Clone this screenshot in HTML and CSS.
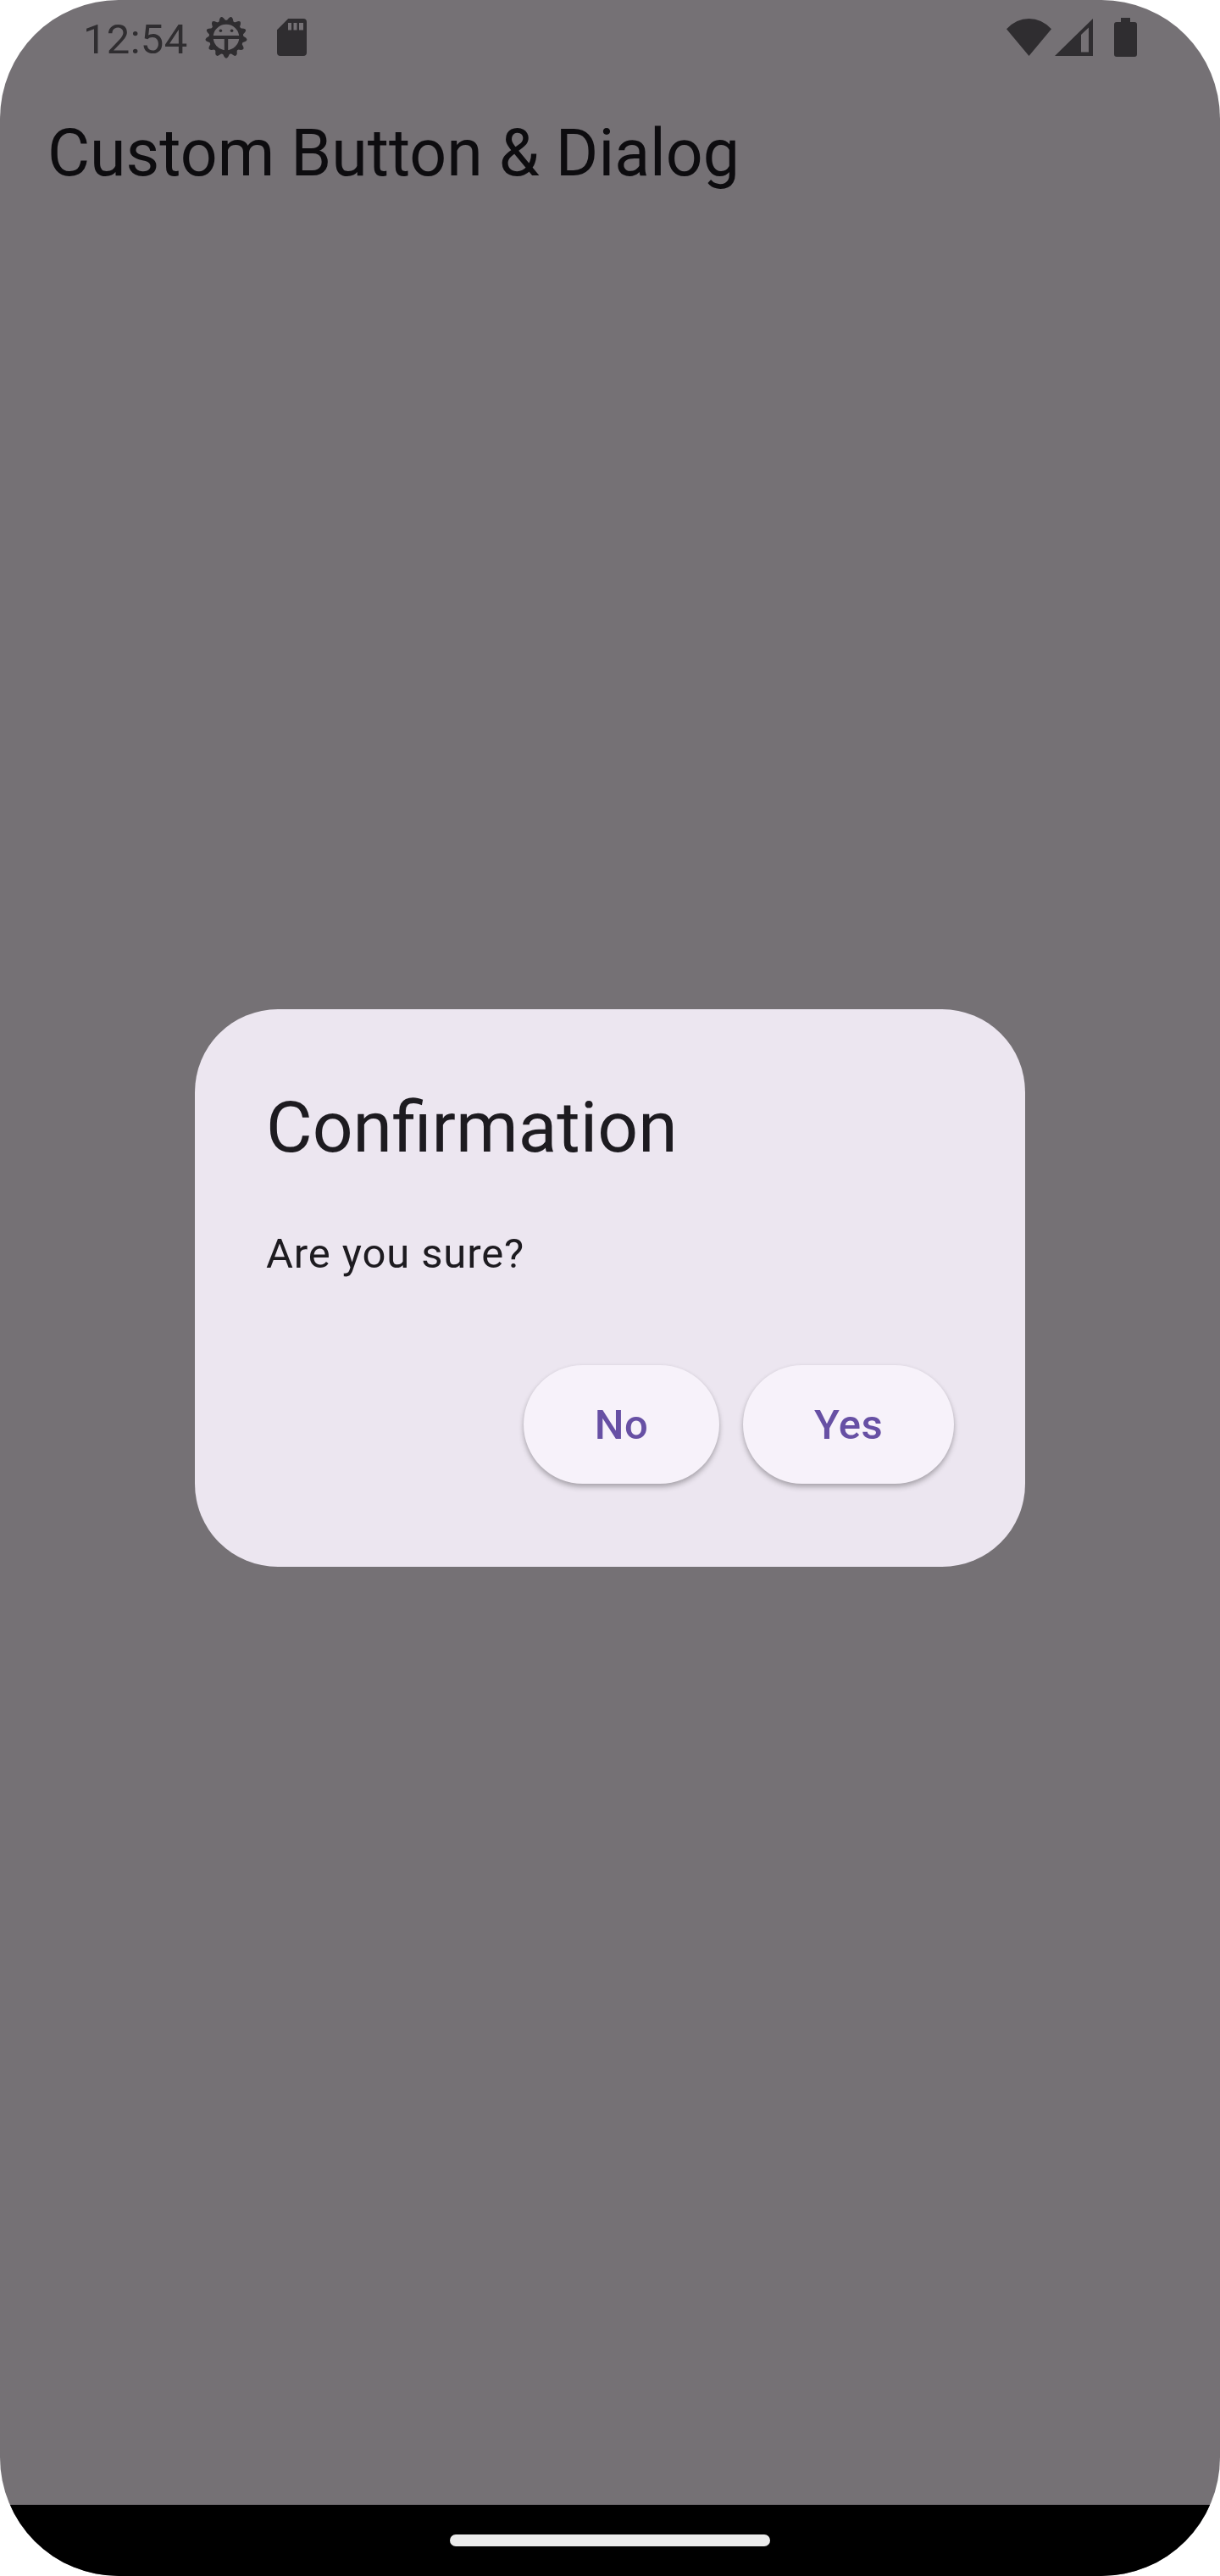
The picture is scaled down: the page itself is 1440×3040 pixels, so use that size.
FILE: index.html
```html
<!DOCTYPE html>
<html lang="en">
<head>
<meta charset="utf-8">
<title>Custom Button &amp; Dialog</title>
<link rel="stylesheet" href="styles.css">
</head>
<body>
<div class="screen">
  <header class="status-bar">
    <span class="clock">12:54</span>
    <svg class="icon-gear" width="50" height="50" viewBox="-25 -25 50 50">
      <defs><path id="tooth" d="M-4.6 18.5L-2.3 22.9Q0 26.4 2.3 22.9L4.6 18.5Z"/></defs>
      <circle r="17.8" fill="none" stroke="currentColor" stroke-width="5"/>
      <g fill="currentColor">
        <use href="#tooth"/>
        <use href="#tooth" transform="rotate(27.69)"/>
        <use href="#tooth" transform="rotate(55.38)"/>
        <use href="#tooth" transform="rotate(83.08)"/>
        <use href="#tooth" transform="rotate(110.77)"/>
        <use href="#tooth" transform="rotate(138.46)"/>
        <use href="#tooth" transform="rotate(166.15)"/>
        <use href="#tooth" transform="rotate(193.85)"/>
        <use href="#tooth" transform="rotate(221.54)"/>
        <use href="#tooth" transform="rotate(249.23)"/>
        <use href="#tooth" transform="rotate(276.92)"/>
        <use href="#tooth" transform="rotate(304.62)"/>
        <use href="#tooth" transform="rotate(332.31)"/>
        <path d="M-17 -2H17V2H2.2V17H-2.2V2H-17Z"/>
        <circle cx="-6.6" cy="-7.7" r="1.8"/>
        <circle cx="6.6" cy="-7.7" r="1.8"/>
      </g>
    </svg>
    <svg class="icon-card" width="35" height="44" viewBox="0 0 35 44">
      <path fill="currentColor" fill-rule="evenodd" d="M13.2 0H31Q35 0 35 4V40Q35 44 31 44H4Q0 44 0 40V13.2ZM13 5V13.5H17V5ZM19.5 5V13.5H23.5V5ZM26 5V13.5H31V5Z"/>
    </svg>
    <span class="spacer"></span>
    <svg class="icon-wifi" width="53" height="44" viewBox="0 0 53 44">
      <path fill="currentColor" d="M26.5 44L0 12.2Q11.5 0 26.5 0T53 12.2Z"/>
    </svg>
    <svg class="icon-signal" width="45" height="44" viewBox="0 0 45 44">
      <path fill="currentColor" fill-rule="evenodd" d="M0 44L45 0V44ZM31 19V39.5H40V10.5Z"/>
    </svg>
    <svg class="icon-battery" width="27" height="46" viewBox="0 0 27 46">
      <path fill="currentColor" d="M8 0H19V5H24Q27 5 27 8V43Q27 46 24 46H3Q0 46 0 43V8Q0 5 3 5H8Z"/>
    </svg>
  </header>
  <h1 class="app-title">Custom Button &amp; Dialog</h1>
  <main class="content">
    <section class="dialog" role="dialog">
      <h2 class="dialog-title">Confirmation</h2>
      <p class="dialog-text">Are you sure?</p>
      <div class="dialog-actions">
        <button class="button">No</button>
        <button class="button">Yes</button>
      </div>
    </section>
  </main>
  <footer class="nav-bar"><span class="nav-pill"></span></footer>
</div>
</body>
</html>
```
FILE: styles.css
```css
* { box-sizing: border-box; }
body {
  margin: 0;
  background: #fff;
  font-family: Roboto, "Liberation Sans", sans-serif;
}
.screen {
  display: flex;
  flex-direction: column;
  width: 1440px;
  height: 3040px;
  border-radius: 140px;
  overflow: hidden;
  background: #757175;
}
.status-bar {
  display: flex;
  align-items: center;
  flex: none;
  height: 88px;
  padding: 0 98px;
  color: #2f2d30;
}
.clock {
  width: 122px;
  font-size: 49px;
  line-height: 56px;
  letter-spacing: 0.3px;
  margin-top: 5px;
  white-space: nowrap;
}
.icon-gear { margin-left: 22px; }
.icon-card { margin-left: 35px; }
.spacer { flex: 1; }
.icon-signal { margin-left: 4px; }
.icon-battery { margin-left: 25px; }
.app-title {
  flex: none;
  height: 192px;
  margin: 0;
  padding: 0 56px;
  font-size: 77px;
  font-weight: 400;
  line-height: 186px;
  color: #0d0c0f;
}
.content {
  display: flex;
  flex: 1;
  justify-content: center;
  align-items: flex-start;
  padding-top: 911px;
}
.dialog {
  width: 980px;
  height: 658px;
  padding: 84px;
  border-radius: 98px;
  background: #ece6f0;
  color: #1d1b20;
}
.dialog-title {
  margin: 0 0 56px;
  font-size: 84px;
  font-weight: 400;
  line-height: 112px;
}
.dialog-text {
  margin: 0;
  padding-top: 2px;
  font-size: 49px;
  line-height: 70px;
  letter-spacing: 0.875px;
}
.dialog-actions {
  display: flex;
  justify-content: flex-end;
  gap: 28px;
  margin-top: 96px;
}
.button {
  height: 140px;
  padding: 2px 84px 0;
  border: 0;
  border-radius: 70px;
  background: #f7f2fa;
  box-shadow: 0 4px 6px rgba(0, 0, 0, 0.26), 0 1px 5px rgba(0, 0, 0, 0.06);
  color: #6750a4;
  font: 500 49px/70px Roboto, "Liberation Sans", sans-serif;
  letter-spacing: 0.35px;
}
.nav-bar {
  display: flex;
  flex: none;
  justify-content: center;
  height: 84px;
  padding-top: 35px;
  background: #000;
}
.nav-pill {
  width: 378px;
  height: 14px;
  border-radius: 7px;
  background: #ebebeb;
}
```
